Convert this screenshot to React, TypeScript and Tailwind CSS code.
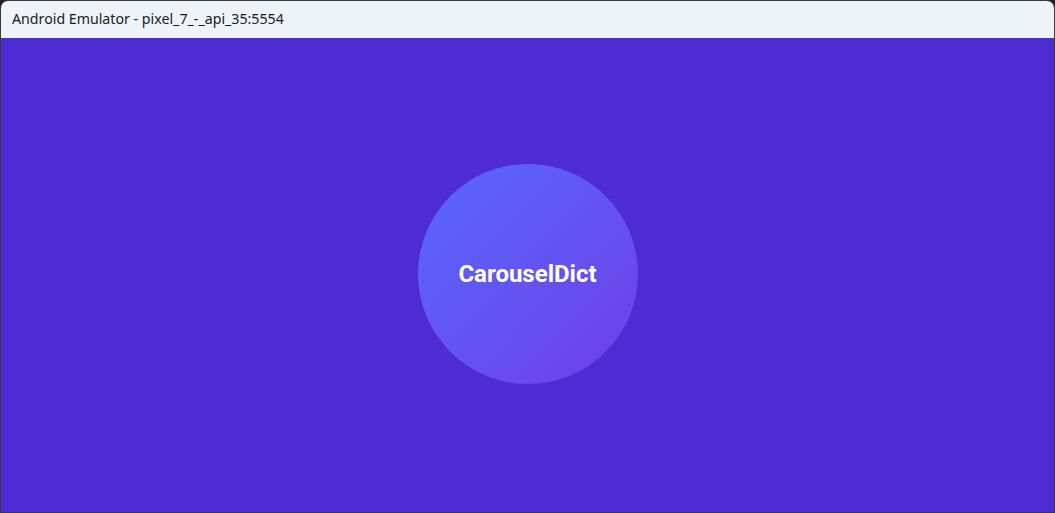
import React from "react";

export default function App() {
  return (
    <div className="w-[1055px] h-[513px] bg-[#1f1f1f] overflow-hidden">
      <div className="w-full h-full flex flex-col rounded-t-[8px] border border-[#3a3a3a] overflow-hidden">
        <div className="h-[37px] shrink-0 bg-[#eef3f8] flex items-center pl-[11px] pb-[1px]">
          <span className="text-[14.2px] text-[#1b1b1b]" style={{ fontFamily: '"Segoe UI", "Noto Sans", "Open Sans", sans-serif' }}>
            Android Emulator - pixel_7_-_api_35:5554
          </span>
        </div>
        <div className="flex-1 bg-[#4f2bd3] flex items-center justify-center">
          <div className="w-[220px] h-[220px] mt-[-2px] rounded-full bg-gradient-to-br from-[#5568fd] to-[#6d3de6] flex items-center justify-center">
            <span className="text-white font-bold text-[24px]" style={{ fontFamily: 'Roboto, "Noto Sans", sans-serif' }}>
              CarouselDict
            </span>
          </div>
        </div>
      </div>
    </div>
  );
}
